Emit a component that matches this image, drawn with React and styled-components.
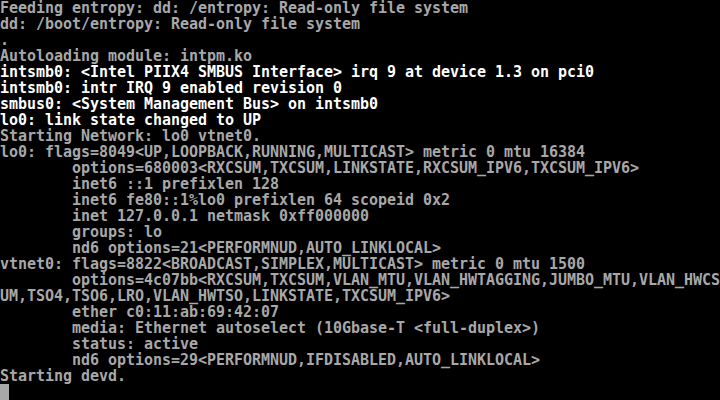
import React from 'react';
import styled, { createGlobalStyle } from 'styled-components';

const GlobalStyle = createGlobalStyle`
    html, body {
        margin: 0;
        padding: 0;
        background: #000;
    }
`;

const Screen = styled.div`
    width: 720px;
    height: 400px;
    overflow: hidden;
    background: #000;
    display: flex;
    flex-direction: column;
    font-family: "DejaVu Sans Mono", "Liberation Mono", monospace;
    font-size: 15px;
    font-weight: bold;
    letter-spacing: -0.03px;
`;

const Line = styled.div`
    height: 16px;
    line-height: 16px;
    white-space: pre;
    color: ${props => (props.$bright ? '#ffffff' : '#a8a8a8')};
`;

const Cursor = styled.span`
    display: inline-block;
    width: 9px;
    height: 16px;
    background: #a8a8a8;
    vertical-align: top;
`;

const T = '        ';

const lines = [
    { text: 'Feeding entropy: dd: /entropy: Read-only file system' },
    { text: 'dd: /boot/entropy: Read-only file system' },
    { text: '.' },
    { text: 'Autoloading module: intpm.ko' },
    { text: 'intsmb0: <Intel PIIX4 SMBUS Interface> irq 9 at device 1.3 on pci0', bright: true },
    { text: 'intsmb0: intr IRQ 9 enabled revision 0', bright: true },
    { text: 'smbus0: <System Management Bus> on intsmb0', bright: true },
    { text: 'lo0: link state changed to UP', bright: true },
    { text: 'Starting Network: lo0 vtnet0.' },
    { text: 'lo0: flags=8049<UP,LOOPBACK,RUNNING,MULTICAST> metric 0 mtu 16384' },
    { text: T + 'options=680003<RXCSUM,TXCSUM,LINKSTATE,RXCSUM_IPV6,TXCSUM_IPV6>' },
    { text: T + 'inet6 ::1 prefixlen 128' },
    { text: T + 'inet6 fe80::1%lo0 prefixlen 64 scopeid 0x2' },
    { text: T + 'inet 127.0.0.1 netmask 0xff000000' },
    { text: T + 'groups: lo' },
    { text: T + 'nd6 options=21<PERFORMNUD,AUTO_LINKLOCAL>' },
    { text: 'vtnet0: flags=8822<BROADCAST,SIMPLEX,MULTICAST> metric 0 mtu 1500' },
    { text: T + 'options=4c07bb<RXCSUM,TXCSUM,VLAN_MTU,VLAN_HWTAGGING,JUMBO_MTU,VLAN_HWCS' },
    { text: 'UM,TSO4,TSO6,LRO,VLAN_HWTSO,LINKSTATE,TXCSUM_IPV6>' },
    { text: T + 'ether c0:11:ab:69:42:07' },
    { text: T + 'media: Ethernet autoselect (10Gbase-T <full-duplex>)' },
    { text: T + 'status: active' },
    { text: T + 'nd6 options=29<PERFORMNUD,IFDISABLED,AUTO_LINKLOCAL>' },
    { text: 'Starting devd.' },
];

const App = () => {
    return (
        <Screen>
            <GlobalStyle />
            {lines.map((line, i) => (
                <Line key={i} $bright={line.bright}>{line.text}</Line>
            ))}
            <Line><Cursor /></Line>
        </Screen>
    );
};

export default App;
